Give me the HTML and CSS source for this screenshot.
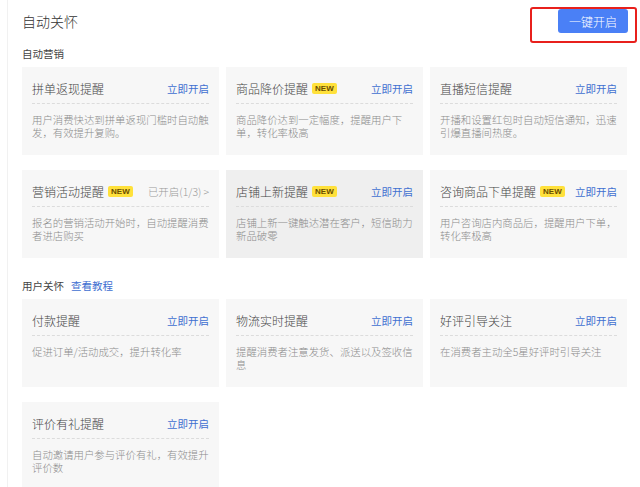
FILE: index.html
```html
<!DOCTYPE html>
<html lang="zh-CN">

<head>
    <meta charset="UTF-8">
    <meta name="viewport" content="width=device-width, initial-scale=1.0">
    <title>自动关怀</title>
    <link rel="stylesheet" href="styles.css">
</head>

<body>
    <div class="page">
        <div class="header">
            <h1 class="heading">自动关怀</h1>
            <button class="btn-primary">一键开启</button>
            <div class="mark"></div>
        </div>

        <div class="section-label">自动营销</div>
        <div class="cards">
            <div class="card">
                <div class="card-head">
                    <span class="card-title">拼单返现提醒</span>
                    <a class="card-link">立即开启</a>
                </div>
                <p class="card-desc">用户消费快达到拼单返现门槛时自动触发，有效提升复购。</p>
            </div>
            <div class="card">
                <div class="card-head">
                    <span class="card-title">商品降价提醒<span class="badge">NEW</span></span>
                    <a class="card-link">立即开启</a>
                </div>
                <p class="card-desc">商品降价达到一定幅度，提醒用户下单，转化率极高</p>
            </div>
            <div class="card">
                <div class="card-head">
                    <span class="card-title">直播短信提醒</span>
                    <a class="card-link">立即开启</a>
                </div>
                <p class="card-desc">开播和设置红包时自动短信通知，迅速引爆直播间热度。</p>
            </div>
            <div class="card">
                <div class="card-head">
                    <span class="card-title">营销活动提醒<span class="badge">NEW</span></span>
                    <a class="card-status">已开启(1/3)<span class="chev">&gt;</span></a>
                </div>
                <p class="card-desc">报名的营销活动开始时，自动提醒消费者进店购买</p>
            </div>
            <div class="card card-hover">
                <div class="card-head">
                    <span class="card-title">店铺上新提醒<span class="badge">NEW</span></span>
                    <a class="card-link">立即开启</a>
                </div>
                <p class="card-desc">店铺上新一键触达潜在客户，短信助力新品破零</p>
            </div>
            <div class="card">
                <div class="card-head">
                    <span class="card-title">咨询商品下单提醒<span class="badge">NEW</span></span>
                    <a class="card-link">立即开启</a>
                </div>
                <p class="card-desc">用户咨询店内商品后，提醒用户下单，转化率极高</p>
            </div>
        </div>

        <div class="section-label section-gap">用户关怀<a class="tutorial">查看教程</a></div>
        <div class="cards">
            <div class="card">
                <div class="card-head">
                    <span class="card-title">付款提醒</span>
                    <a class="card-link">立即开启</a>
                </div>
                <p class="card-desc">促进订单/活动成交，提升转化率</p>
            </div>
            <div class="card">
                <div class="card-head">
                    <span class="card-title">物流实时提醒</span>
                    <a class="card-link">立即开启</a>
                </div>
                <p class="card-desc">提醒消费者注意发货、派送以及签收信息</p>
            </div>
            <div class="card">
                <div class="card-head">
                    <span class="card-title">好评引导关注</span>
                    <a class="card-link">立即开启</a>
                </div>
                <p class="card-desc">在消费者主动全5星好评时引导关注</p>
            </div>
            <div class="card">
                <div class="card-head">
                    <span class="card-title">评价有礼提醒</span>
                    <a class="card-link">立即开启</a>
                </div>
                <p class="card-desc">自动邀请用户参与评价有礼，有效提升评价数</p>
            </div>
        </div>
    </div>
</body>

</html>
```

FILE: styles.css
```css
body {
    margin: 0;
    font-family: "Noto Sans CJK SC", "Noto Sans", sans-serif;
    background-color: #fff;
    color: #333;
}

.page {
    margin-left: 7px;
    border-left: 1px solid #f1f1f1;
    padding-left: 14px;
    width: 605px;
    min-height: 487px;
}

.header {
    position: relative;
    display: flex;
    justify-content: space-between;
    align-items: center;
    padding-top: 9px;
    height: 24px;
}

.heading {
    margin: 0;
    font-size: 14px;
    font-weight: 300;
    line-height: 24px;
    color: #333;
}

.btn-primary {
    width: 70px;
    height: 24px;
    margin-right: -1px;
    border: none;
    border-radius: 3px;
    background-color: #4a80f6;
    color: #fff;
    font-family: inherit;
    font-size: 12px;
    font-weight: 300;
    padding: 0;
    cursor: pointer;
}

/* red annotation frame drawn over the button */
.mark {
    position: absolute;
    left: 508px;
    top: 7px;
    width: 103px;
    height: 32px;
    border: 2px solid #e8201c;
    border-radius: 3px;
}

.section-label {
    margin-top: 14px;
    font-size: 10.5px;
    line-height: 14px;
    color: #444;
}

.section-gap {
    margin-top: 21px;
}

.tutorial {
    margin-left: 7px;
    color: #3f6fd1;
    cursor: pointer;
}

.cards {
    display: grid;
    grid-template-columns: repeat(3, 1fr);
    column-gap: 7px;
    row-gap: 15px;
    margin-top: 6px;
}

.card {
    height: 88px;
    box-sizing: border-box;
    padding: 14px 9px 0 10px;
    background-color: #f7f7f7;
}

.card-hover {
    background-color: #efefef;
}

.card-head {
    display: flex;
    justify-content: space-between;
    align-items: center;
    height: 14px;
    padding-bottom: 8px;
    margin-right: 1px;
    border-bottom: 1px dashed #dcdcdc;
}

.card-title {
    display: flex;
    align-items: center;
    font-size: 12px;
    font-weight: 300;
    color: #444;
}

.badge {
    margin-left: 4px;
    padding: 0 3px;
    height: 11px;
    line-height: 11px;
    border-radius: 2px;
    background-color: #ffe13b;
    color: #6b4d00;
    font-family: "Liberation Sans", Arial, sans-serif;
    font-size: 8px;
    font-weight: bold;
}

.card-link {
    font-size: 10.5px;
    color: #3f6fd1;
    cursor: pointer;
}

.card-status {
    font-size: 10.5px;
    font-weight: 300;
    color: #999;
}

.chev {
    margin-left: 2px;
}

.card-desc {
    margin: 9px 0 0;
    font-size: 10.4px;
    font-weight: 300;
    line-height: 13px;
    color: #8c8c8c;
}
```
